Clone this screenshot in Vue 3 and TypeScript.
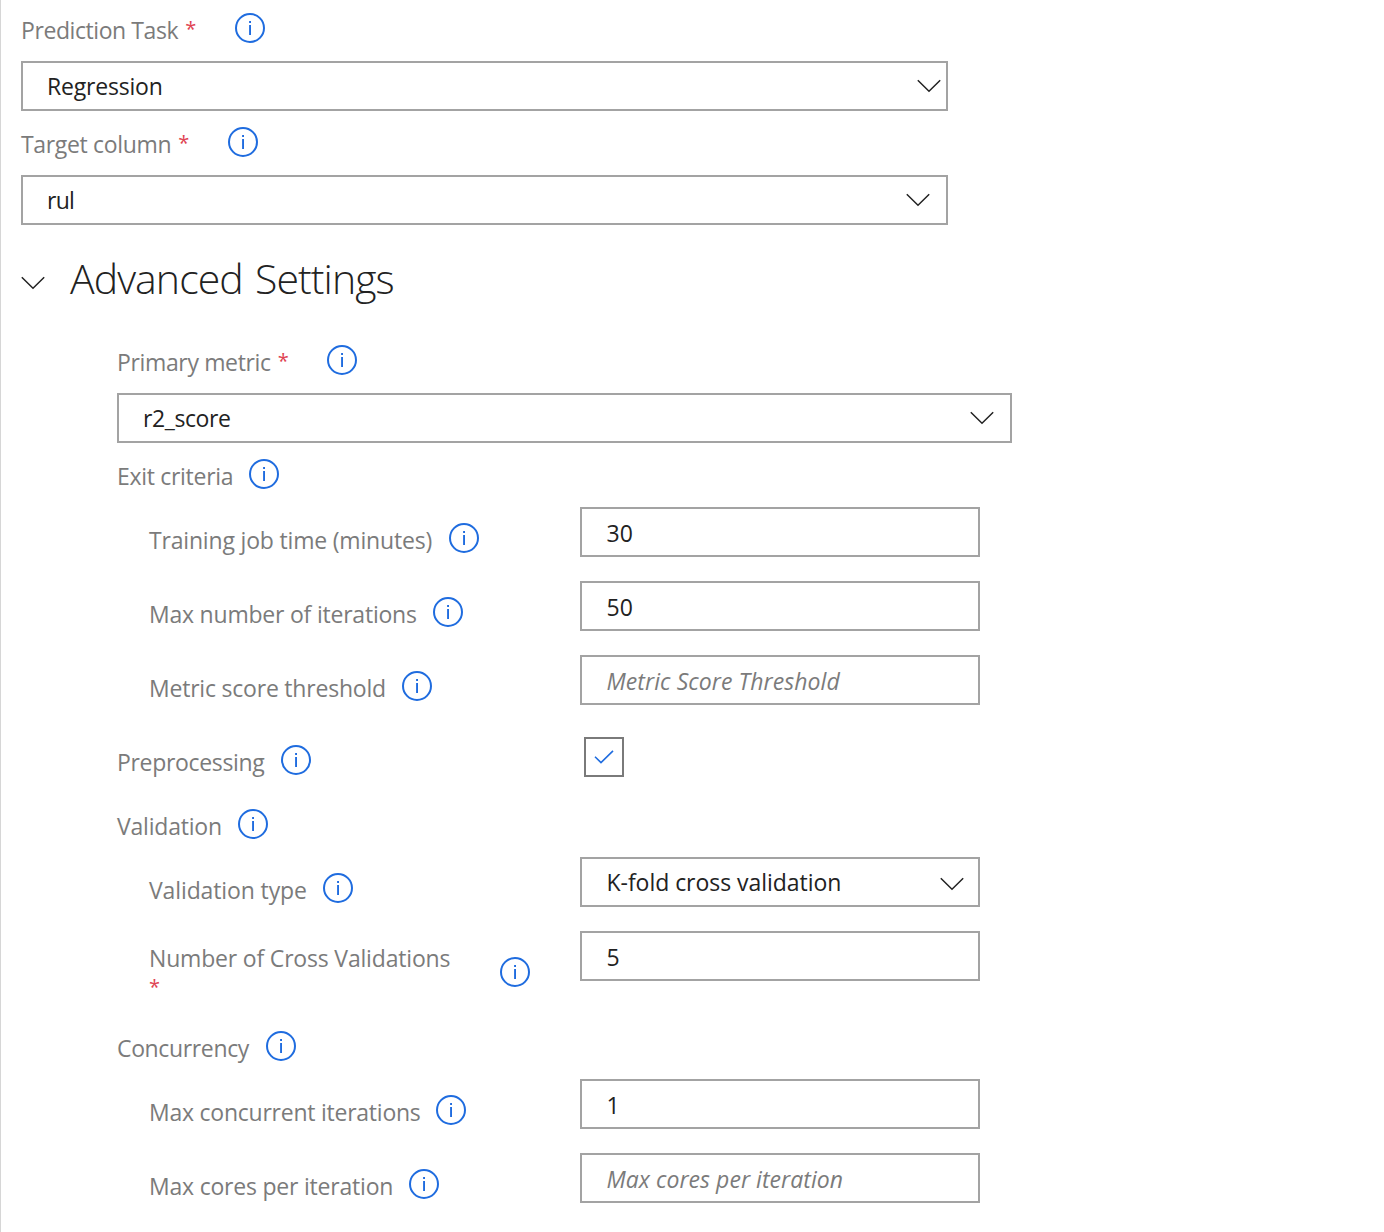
<script setup lang="ts">
import { defineComponent, h } from 'vue'

interface Field {
  label: string
  labelWidth: number
  labelSpacing?: number
  required?: boolean
  kind: 'select' | 'input' | 'check' | 'none'
  value?: string
  valueSpacing?: number
  placeholder?: string
  level: 'top' | 'section' | 'item'
  variant?: string
}

const topFields: Field[] = [
  { label: 'Prediction Task', labelWidth: 214, labelSpacing: -0.42, required: true, kind: 'select', value: 'Regression', valueSpacing: -0.2, level: 'top', variant: 'edge' },
  { label: 'Target column', labelWidth: 207, labelSpacing: -0.332, required: true, kind: 'select', value: 'rul', valueSpacing: -0.7, level: 'top' },
]

const metric: Field = { label: 'Primary metric', labelWidth: 210, labelSpacing: -0.356, required: true, kind: 'select', value: 'r2_score', valueSpacing: -0.405, level: 'top' }

const advanced: Field[] = [
  { label: 'Exit criteria', labelWidth: 132, labelSpacing: -0.3, kind: 'none', level: 'section' },
  { label: 'Training job time (minutes)', labelWidth: 300, labelSpacing: -0.18, kind: 'input', value: '30', valueSpacing: 0.2, level: 'item' },
  { label: 'Max number of iterations', labelWidth: 284, labelSpacing: -0.215, kind: 'input', value: '50', valueSpacing: 0.2, level: 'item' },
  { label: 'Metric score threshold', labelWidth: 253, labelSpacing: -0.21, kind: 'input', placeholder: 'Metric Score Threshold', valueSpacing: 0.08, level: 'item' },
  { label: 'Preprocessing', labelWidth: 164, labelSpacing: -0.33, kind: 'check', level: 'section' },
  { label: 'Validation', labelWidth: 121, labelSpacing: -0.2, kind: 'none', level: 'section' },
  { label: 'Validation type', labelWidth: 174, labelSpacing: -0.119, kind: 'select', value: 'K-fold cross validation', valueSpacing: -0.04, level: 'item' },
  { label: 'Number of Cross Validations', labelWidth: 351, labelSpacing: -0.18, required: true, kind: 'input', value: '5', level: 'item', variant: 'wrapped' },
  { label: 'Concurrency', labelWidth: 149, labelSpacing: -0.36, kind: 'none', level: 'section' },
  { label: 'Max concurrent iterations', labelWidth: 287, labelSpacing: -0.24, kind: 'input', value: '1', level: 'item' },
  { label: 'Max cores per iteration', labelWidth: 260, labelSpacing: -0.21, kind: 'input', placeholder: 'Max cores per iteration', valueSpacing: 0.05, level: 'item' },
]

const InfoIcon = defineComponent({
  setup: () => () =>
    h('svg', { width: 30, height: 30, viewBox: '0 0 30 30', fill: 'none' }, [
      h('circle', { cx: 15, cy: 15, r: 14, stroke: '#1f6cdf', 'stroke-width': 2 }),
      h('path', { d: 'M14.1 8h1.9v2h-1.9zM14.1 12h1.9v10h-1.9z', fill: '#1f6cdf' }),
    ]),
})

const Chevron = defineComponent({
  setup: () => () =>
    h('svg', { width: 24, height: 14, viewBox: '0 0 24 14', fill: 'none' }, [
      h('path', { d: 'M.8 1.2 12 12.2 23.2 1.2', stroke: '#222', 'stroke-width': 1.5 }),
    ]),
})
</script>

<template>
  <main class="form">
    <template v-for="f in topFields" :key="f.label">
      <div class="label-row">
        <span class="label" :style="{ width: f.labelWidth + 'px' }">
          <span :style="{ letterSpacing: f.labelSpacing + 'px' }">{{ f.label }}</span><span class="star">*</span>
        </span>
        <InfoIcon class="info" />
      </div>
      <div class="box select" :class="f.variant">
        <span :style="{ letterSpacing: f.valueSpacing + 'px' }">{{ f.value }}</span>
        <Chevron class="chevron" />
      </div>
    </template>

    <h2 class="heading">
      <Chevron class="toggle" />
      <span>Advanced Settings</span>
    </h2>

    <section class="advanced">
      <div class="label-row">
        <span class="label" :style="{ width: metric.labelWidth + 'px' }">
          <span :style="{ letterSpacing: metric.labelSpacing + 'px' }">{{ metric.label }}</span><span class="star">*</span>
        </span>
        <InfoIcon class="info" />
      </div>
      <div class="box select metric">
        <span :style="{ letterSpacing: metric.valueSpacing + 'px' }">{{ metric.value }}</span>
        <Chevron class="chevron" />
      </div>

      <div v-for="f in advanced" :key="f.label" class="row" :class="[f.level, f.kind, f.variant]">
        <div class="name">
          <span class="label" :style="{ width: f.labelWidth + 'px' }">
            <span :style="{ letterSpacing: f.labelSpacing + 'px' }">{{ f.label }}</span>
            <span v-if="f.required" class="star">*</span>
          </span>
          <InfoIcon class="info" />
        </div>
        <div v-if="f.kind === 'select' || f.kind === 'input'" class="box" :class="f.kind">
          <span :class="{ placeholder: f.placeholder }" :style="{ letterSpacing: (f.valueSpacing ?? 0) + 'px' }">{{ f.value ?? f.placeholder }}</span>
          <Chevron v-if="f.kind === 'select'" class="chevron" />
        </div>
        <div v-else-if="f.kind === 'check'" class="checkbox">
          <svg width="20" height="14" viewBox="0 0 20 14" fill="none">
            <path d="M1 6.7 7 12.6 19 .9" stroke="#1f6cdf" stroke-width="1.6" />
          </svg>
        </div>
      </div>
    </section>
  </main>
</template>

<style>
body {
  margin: 0;
  background: #fff;
}
</style>

<style scoped>
.form {
  box-sizing: border-box;
  height: 1232px;
  overflow: hidden;
  padding-left: 20px;
  border-left: 1px solid #d6d6d6;
  color: #222;
  font: 400 23px/46px 'Open Sans', 'Noto Sans', sans-serif;
  white-space: nowrap;
}
.label-row,
.name {
  display: flex;
  height: 64px;
}
.form > .label-row:first-child {
  margin-top: -3px;
}
.label {
  flex: none;
  color: #7b7b7b;
  line-height: 66px;
}
.info {
  flex: none;
  margin-top: 16px;
}
.star {
  display: inline-block;
  margin-left: 7px;
  color: #e04352;
  font-size: 20px;
  line-height: 1;
  transform: translateY(-3px);
}
.box {
  display: flex;
  justify-content: space-between;
  box-sizing: border-box;
  width: 927px;
  height: 50px;
  padding: 0 16px 0 24px;
  border: 2px solid #a3a3a3;
}
.box.edge {
  padding-right: 5px;
}
.box.metric {
  width: 895px;
}
.chevron {
  margin-top: 16px;
}
.heading {
  display: flex;
  gap: 25px;
  height: 104px;
  margin: 0;
  font-size: 41px;
  font-weight: 300;
  line-height: 107px;
  letter-spacing: -0.93px;
  word-spacing: 2.5px;
}
.toggle {
  margin-top: 51px;
}
.advanced {
  padding-left: 96px;
}
.row {
  display: flex;
  height: 74px;
}
.row.none,
.row.check {
  height: 64px;
}
.name {
  width: 463px;
  flex: none;
}
.item .name {
  box-sizing: border-box;
  padding-left: 32px;
}
.row .box {
  width: 400px;
  padding: 0 14px 0 24.5px;
}
.row .chevron {
  margin-top: 18px;
}
.row .box.input {
  line-height: 48px;
}
.placeholder {
  color: #7b7b7b;
  font-style: italic;
}
.row.wrapped {
  height: 84px;
}
.wrapped .label {
  display: flex;
  flex-direction: column;
  line-height: 32px;
  padding-top: 11px;
}
.wrapped .star {
  margin-left: 0;
  line-height: 32px;
}
.wrapped .info {
  margin-top: 26px;
}
.checkbox {
  display: flex;
  justify-content: center;
  align-items: center;
  box-sizing: border-box;
  width: 40px;
  height: 40px;
  margin: 8px 0 0 4px;
  border: 2px solid #7a7a7a;
}
</style>
